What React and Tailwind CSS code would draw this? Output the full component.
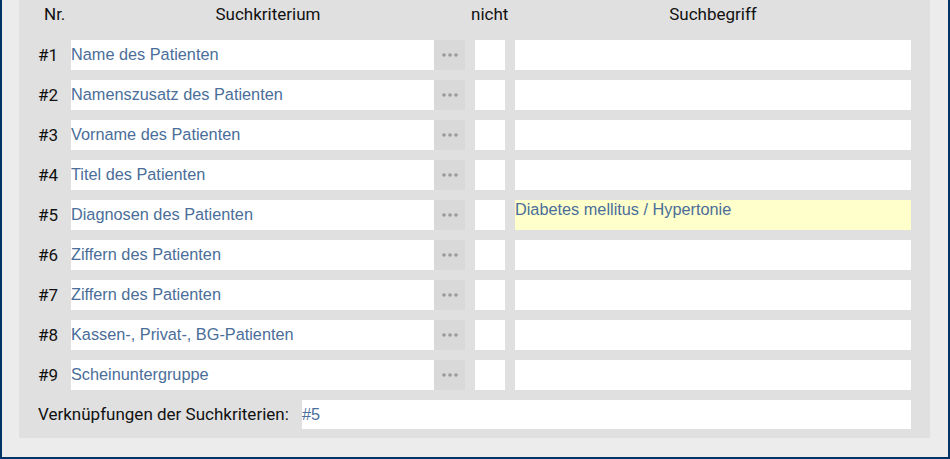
import React from 'react';

const rows = [
  { nr: '#1', label: 'Name des Patienten', value: '' },
  { nr: '#2', label: 'Namenszusatz des Patienten', value: '' },
  { nr: '#3', label: 'Vorname des Patienten', value: '' },
  { nr: '#4', label: 'Titel des Patienten', value: '' },
  { nr: '#5', label: 'Diagnosen des Patienten', value: 'Diabetes mellitus / Hypertonie' },
  { nr: '#6', label: 'Ziffern des Patienten', value: '' },
  { nr: '#7', label: 'Ziffern des Patienten', value: '' },
  { nr: '#8', label: 'Kassen-, Privat-, BG-Patienten', value: '' },
  { nr: '#9', label: 'Scheinuntergruppe', value: '' },
];

const Dots = () => (
  <svg width="16" height="4" viewBox="0 0 16 4">
    <circle cx="2" cy="2" r="1.8" fill="#9a9a9a" />
    <circle cx="8" cy="2" r="1.8" fill="#9a9a9a" />
    <circle cx="14" cy="2" r="1.8" fill="#9a9a9a" />
  </svg>
);

const App = () => {
  return (
    <div className="w-[950px] h-[459px] bg-[#ececec] border-x-2 border-b-2 border-[#003366] pl-[17px] pr-[18px] pb-[19px] font-['Roboto',sans-serif] text-[17px] text-[#111]">
      <div className="h-[438px] bg-[#e0e0e0] flex flex-col">
        {/* header */}
        <div className="flex h-[30px] items-center">
          <div className="w-[52px] pl-[25px]">Nr.</div>
          <div className="w-[394px] text-center">Suchkriterium</div>
          <div className="w-[50px] pl-[6px]">nicht</div>
          <div className="w-[396px] text-center">Suchbegriff</div>
        </div>

        <div className="flex flex-col gap-[10px] mt-[10px]">
          {rows.map((row) => (
            <div key={row.nr} className="flex h-[30px] items-stretch">
              <div className="w-[52px] pl-[19px] flex items-center pt-[1px]">{row.nr}</div>
              <div className="w-[363px] bg-white flex items-center pb-[2px] font-['Liberation_Sans',Arial,sans-serif] text-[16.3px] text-[#4a6e99]">
                {row.label}
              </div>
              <div className="w-[31px] bg-[#d9d9d9] flex items-center justify-center">
                <Dots />
              </div>
              <div className="w-[30px] ml-[10px] bg-white" />
              <div
                className={`w-[396px] ml-[10px] font-['Liberation_Sans',Arial,sans-serif] text-[16.3px] leading-[18px] text-[#4a6e99] ${
                  row.value ? 'bg-[#ffffcc]' : 'bg-white'
                }`}
              >
                {row.value}
              </div>
            </div>
          ))}

          <div className="flex h-[29px] items-stretch">
            <div className="w-[283px] pl-[19px] flex items-center">Verknüpfungen der Suchkriterien:</div>
            <div className="w-[609px] bg-white flex items-center font-['Liberation_Sans',Arial,sans-serif] text-[16.3px] text-[#4a6e99]">
              #5
            </div>
          </div>
        </div>
      </div>
    </div>
  );
};

export default App;
